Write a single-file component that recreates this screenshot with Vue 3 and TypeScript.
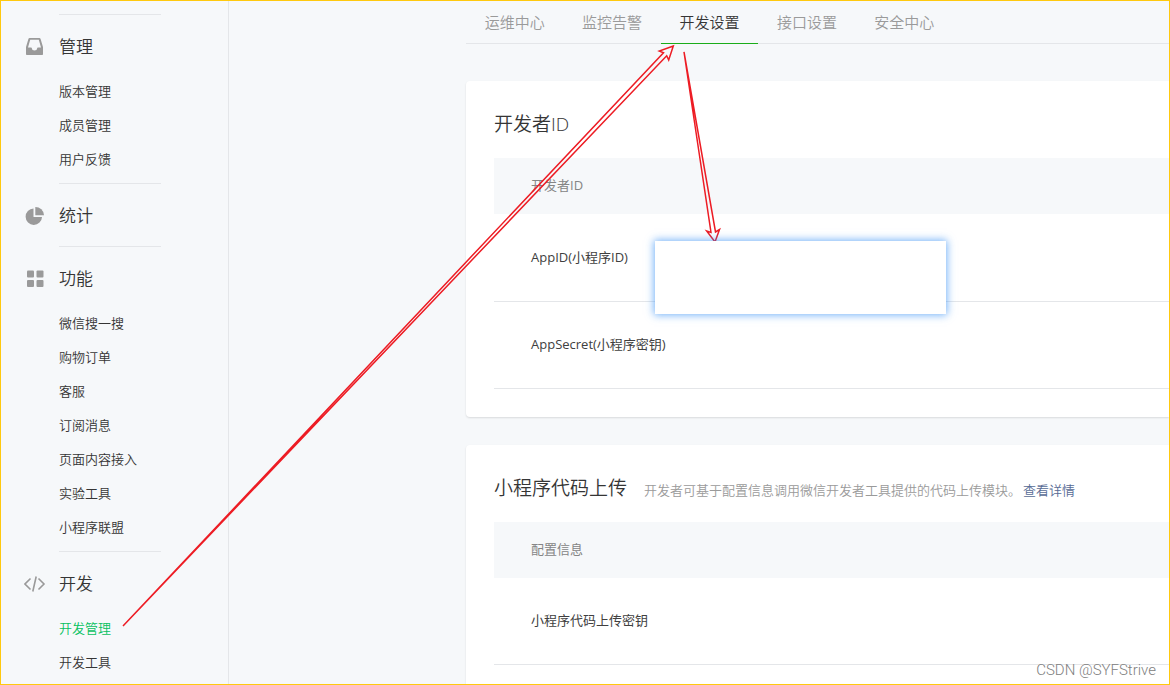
<script setup lang="ts">
interface NavItem {
  label: string
  active?: boolean
}

interface NavGroup {
  icon: 'inbox' | 'pie' | 'grid' | 'code'
  title: string
  items: NavItem[]
}

interface Card {
  title: string
  note?: string
  link?: string
  head: string
  rows: string[]
}

const groups: NavGroup[] = [
  { icon: 'inbox', title: '管理', items: [{ label: '版本管理' }, { label: '成员管理' }, { label: '用户反馈' }] },
  { icon: 'pie', title: '统计', items: [] },
  {
    icon: 'grid',
    title: '功能',
    items: [
      { label: '微信搜一搜' },
      { label: '购物订单' },
      { label: '客服' },
      { label: '订阅消息' },
      { label: '页面内容接入' },
      { label: '实验工具' },
      { label: '小程序联盟' },
    ],
  },
  { icon: 'code', title: '开发', items: [{ label: '开发管理', active: true }, { label: '开发工具' }] },
]

const tabs: NavItem[] = [
  { label: '运维中心' },
  { label: '监控告警' },
  { label: '开发设置', active: true },
  { label: '接口设置' },
  { label: '安全中心' },
]

const cards: Card[] = [
  { title: '开发者ID', head: '开发者ID', rows: ['AppID(小程序ID)', 'AppSecret(小程序密钥)'] },
  {
    title: '小程序代码上传',
    note: '开发者可基于配置信息调用微信开发者工具提供的代码上传模块。',
    link: '查看详情',
    head: '配置信息',
    rows: ['小程序代码上传密钥'],
  },
]
</script>

<template>
  <div class="page">
    <nav class="sidebar" aria-label="主菜单">
      <section v-for="group in groups" :key="group.title" class="group">
        <h2 class="group-title">
          <svg class="icon" viewBox="1 0 22 22" aria-hidden="true">
            <path
              v-if="group.icon === 'inbox'"
              fill-rule="evenodd"
              d="M6.600 2h9.800q.9 0 1.200.9L20 11v7.200q0 .8-.8.800H3.800q-.8 0-.8-.8V11l2.400-8.100Q5.700 2 6.600 2zM7.200 3.800 5 11.500h3.200q.5 0 .5.500.2 2.500 2.800 2.500t2.800-2.500q0-.5.500-.5H18L15.800 3.800z"
            />
            <g v-else-if="group.icon === 'pie'">
              <path d="M10.500 3.500v8.400H19A8.200 8.200 0 1 1 10.500 3.500z" />
              <path d="M12.300 2A8.600 8.600 0 0 1 21 10.200h-8.700z" />
            </g>
            <g v-else-if="group.icon === 'grid'">
              <rect x="4" y="2.500" width="7" height="7" rx="1" />
              <rect x="13.500" y="2.500" width="7" height="7" rx="1" />
              <rect x="4" y="12" width="7" height="7" rx="1" />
              <rect x="13.500" y="12" width="7" height="7" rx="1" />
            </g>
            <path
              v-else
              class="stroked"
              d="M7.500 5.500 2 11l5.500 5.500M15.500 5.500 21 11l-5.500 5.500M13.200 3.500 9.800 18.500"
            />
          </svg>
          <span>{{ group.title }}</span>
        </h2>
        <ul v-if="group.items.length" class="items">
          <li v-for="item in group.items" :key="item.label">
            <a href="#" :class="{ active: item.active }">{{ item.label }}</a>
          </li>
        </ul>
      </section>
    </nav>

    <main class="content">
      <nav class="tabbar" aria-label="开发管理">
        <div class="tabs">
          <a v-for="tab in tabs" :key="tab.label" href="#" :class="['tab', { active: tab.active }]">{{ tab.label }}</a>
        </div>
      </nav>

      <section v-for="card in cards" :key="card.title" class="card">
        <header class="card-head">
          <h3>{{ card.title }}</h3>
          <p v-if="card.note">{{ card.note }}<a href="#">{{ card.link }}</a></p>
        </header>
        <table>
          <thead>
            <tr><th scope="col">{{ card.head }}</th></tr>
          </thead>
          <tbody>
            <tr v-for="row in card.rows" :key="row"><td>{{ row }}</td></tr>
          </tbody>
        </table>
      </section>
    </main>

    <svg class="arrows" width="800" height="660" aria-hidden="true">
      <path d="M123 626 663.500 52.700 659.300 51 673.300 46 668.700 60 666.700 55.700z" />
      <path d="M684 52 711 232.500 706.700 231 715 242 719.500 229.500 715.500 232z" />
    </svg>
    <div class="mask"></div>
    <span class="watermark">CSDN @SYFStrive</span>
  </div>
</template>

<style>
body {
  margin: 0;
}
</style>

<style scoped>
.page {
  position: relative;
  display: flex;
  box-sizing: border-box;
  height: 100vh;
  overflow: hidden;
  border: 1px solid #ffc90e;
  background: #f6f8fa;
  color: #353535;
  font-family: "Open Sans", "Noto Sans CJK SC", sans-serif;
  font-size: 13px;
  font-weight: 350;
}

a {
  color: inherit;
  text-decoration: none;
}

h2,
h3,
p,
ul {
  margin: 0;
  padding: 0;
  font-weight: inherit;
}

.sidebar {
  flex: none;
  box-sizing: border-box;
  width: 228px;
  padding: 13px 67px 0 58px;
  border-right: 1px solid #e4e6e9;
}

.group {
  padding: 16px 0 14px;
  border-top: 1px solid #e4e6e9;
}

.group:has(.items) {
  padding-bottom: 7px;
}

.group-title {
  display: flex;
  align-items: center;
  gap: 13px;
  height: 32px;
  margin-left: -35px;
  font-size: 17px;
}

.group-title span {
  padding-bottom: 3px;
}

.icon {
  width: 22px;
  height: 22px;
  fill: #9a9a9a;
}

.stroked {
  fill: none;
  stroke: #9a9a9a;
  stroke-width: 1.6;
}

.items {
  margin-top: 11px;
  list-style: none;
  line-height: 34px;
  white-space: nowrap;
}

.items .active {
  color: #07c160;
}

.content {
  flex: 1;
  min-width: 0;
  margin-left: 237px;
}

.tabbar {
  box-sizing: border-box;
  height: 43px;
  margin-bottom: 37px;
  border-bottom: 1px solid #e4e6e9;
}

.tabs {
  display: grid;
  grid-template-columns: repeat(5, 1fr);
  width: 487px;
}

.tab {
  height: 42px;
  border-bottom: 1px solid transparent;
  color: #9a9a9a;
  font-size: 15px;
  line-height: 42px;
  text-align: center;
}

.tab.active {
  border-color: #1aad19;
  color: #353535;
}

.card {
  margin-bottom: 28px;
  padding: 28px 0 28px 28px;
  border-radius: 4px 0 0 4px;
  background: #fff;
  box-shadow: 0 1px 2px rgba(0, 0, 0, 0.12);
}

.card-head {
  display: flex;
  align-items: baseline;
  gap: 17px;
  height: 30px;
  margin-bottom: 19px;
  line-height: 30px;
  white-space: nowrap;
}

.card-head h3 {
  font-size: 19px;
}

.card-head p {
  color: #9a9a9a;
}

.card-head a {
  margin-left: 2px;
  color: #576b95;
}

table {
  width: 100%;
  border-collapse: separate;
  border-spacing: 0;
}

th,
td {
  box-sizing: border-box;
  padding: 0 0 3px 37px;
  font-weight: 400;
  text-align: left;
}

th {
  height: 56px;
  background: #f6f8fa;
  color: #858585;
}

td {
  height: 87px;
  border-bottom: 1px solid #e4e6e9;
  color: #404040;
}

tr:not(:last-child) td {
  height: 88px;
}

.arrows {
  position: absolute;
  top: -1px;
  left: -1px;
  fill: none;
  stroke: #ed1c24;
  stroke-width: 1.5;
  pointer-events: none;
}

.mask {
  position: absolute;
  top: 240px;
  left: 654px;
  width: 291px;
  height: 73px;
  background: #fff;
  box-shadow: 0 0 8px 1px rgba(40, 135, 245, 0.65);
}

.watermark {
  position: absolute;
  right: 13px;
  bottom: 4px;
  color: #808080;
  font-family: Roboto, "Liberation Sans", sans-serif;
  font-size: 15px;
  font-weight: 300;
  line-height: 20px;
}
</style>
